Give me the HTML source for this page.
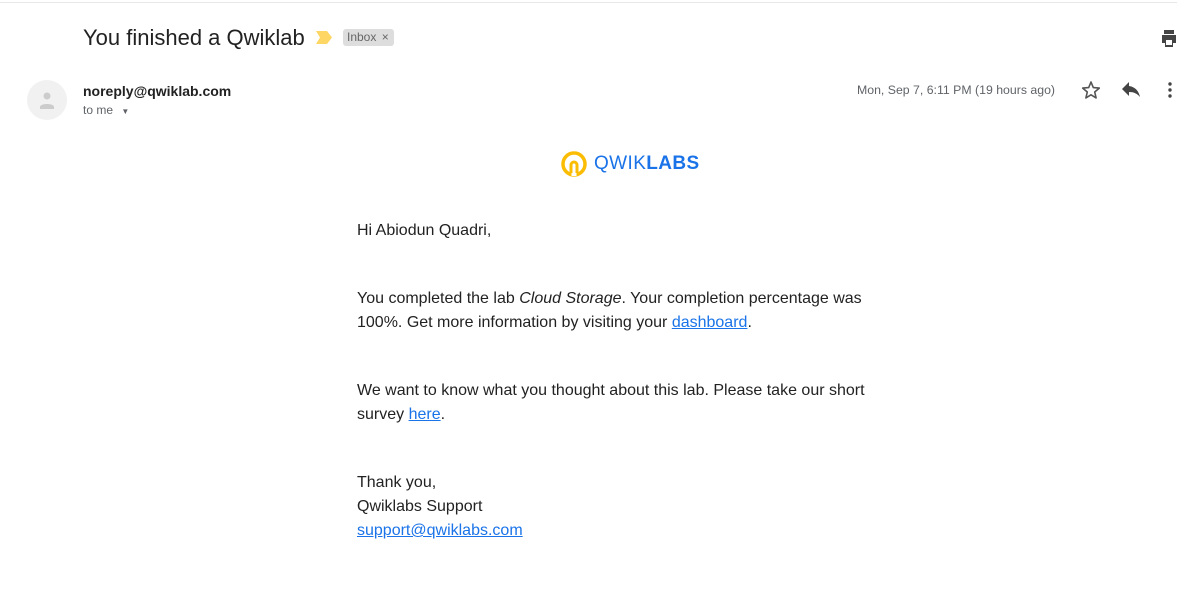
<!DOCTYPE html>
<html><head><meta charset="utf-8"><style>
body{margin:0;width:1177px;height:605px;background:#fff;font-family:"Liberation Sans",Arial,sans-serif;position:relative;overflow:hidden;color:#222}
.a{position:absolute}
.b{position:absolute;left:357px;font-size:16px;line-height:24px;color:#222}
a{color:#1a73e8;text-decoration:underline}
</style></head><body>
<div class="a" style="left:0;top:2px;width:1177px;height:1px;background:#e8e8e8"></div>
<div class="a" style="left:83px;top:25px;font-size:22px;color:#222">You finished a Qwiklab</div>
<svg class="a" style="left:316px;top:31px" width="17" height="13"><path d="M0 0H11L16 6.5 11 13H0L4 6.5Z" fill="#fdd663"/></svg>
<div class="a" style="left:343px;top:29px;height:17px;line-height:17px;padding:0 5px 0 4px;background:#ddd;border-radius:3px;font-size:12px;color:#666">Inbox <span style="margin-left:2px">×</span></div>
<svg class="a" style="left:1161px;top:28px" width="16" height="20"><path d="M3 2h10v4H3z M1 7h14v8h-3v4H4v-4H1z" fill="#444"/><rect x="5" y="12" width="6" height="5" fill="#fff"/></svg>
<div class="a" style="left:27px;top:80px;width:40px;height:40px;border-radius:50%;background:#f1f1f1"></div>
<svg class="a" style="left:38px;top:90px" width="18" height="20"><circle cx="9" cy="6" r="3.5" fill="#ccc"/><path d="M2 17c0-4 14-4 14 0v2H2z" fill="#ccc"/></svg>
<div class="a" style="left:83px;top:83px;font-size:14px;font-weight:bold;color:#222">noreply@qwiklab.com</div>
<div class="a" style="left:83px;top:103px;font-size:12px;color:#5f6368">to me <span style="font-size:8px;margin-left:5px">▼</span></div>
<div class="a" style="left:857px;top:83px;font-size:12.3px;color:#5f6368">Mon, Sep 7, 6:11 PM (19 hours ago)</div>
<svg class="a" style="left:1081px;top:80px" width="20" height="20"><path d="M10 2l2.3 5.6 6 .5-4.6 3.9 1.4 5.9L10 14.8 4.9 17.9l1.4-5.9L1.7 8.1l6-.5z" fill="none" stroke="#555" stroke-width="1.6" stroke-linejoin="round"/></svg>
<svg class="a" style="left:1121px;top:82px" width="20" height="16"><path d="M8 3V0L1 7l7 7v-4c5 0 8 1.5 11 5-1-5-4-10-11-11z" fill="#444"/></svg>
<svg class="a" style="left:1166px;top:81px" width="8" height="18"><circle cx="4" cy="3" r="1.7" fill="#444"/><circle cx="4" cy="9" r="1.7" fill="#444"/><circle cx="4" cy="15" r="1.7" fill="#444"/></svg>
<svg class="a" style="left:561px;top:151px" width="28" height="28"><circle cx="13" cy="13" r="11" fill="none" stroke="#fbbc04" stroke-width="3.5"/><path d="M13 25V13" stroke="#fff" stroke-width="5"/><path d="M10 22v-8a3 3 0 0 1 6 0v8" fill="none" stroke="#fbbc04" stroke-width="3"/></svg>
<div class="a" style="left:594px;top:153px;font-size:19px;color:#1a73e8;letter-spacing:0.4px">QWIK<b>LABS</b></div>
<div class="b" style="top:219px">Hi Abiodun Quadri,</div>
<div class="b" style="top:287px">You completed the lab <i>Cloud Storage</i>. Your completion percentage was<br>100%. Get more information by visiting your <a>dashboard</a>.</div>
<div class="b" style="top:379px">We want to know what you thought about this lab. Please take our short<br>survey <a>here</a>.</div>
<div class="b" style="top:471px">Thank you,<br>Qwiklabs Support<br><a>support@qwiklabs.com</a></div>
</body></html>
